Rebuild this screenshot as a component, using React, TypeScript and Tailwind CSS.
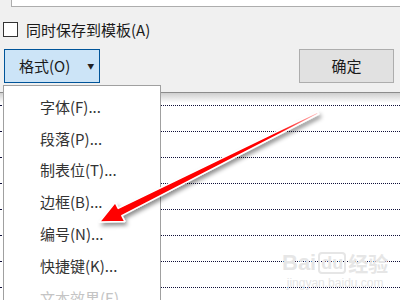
import React from 'react';

const menuItems = [
  { label: '字体(F)...', disabled: false },
  { label: '段落(P)...', disabled: false },
  { label: '制表位(T)...', disabled: false },
  { label: '边框(B)...', disabled: false },
  { label: '编号(N)...', disabled: false },
  { label: '快捷键(K)...', disabled: false },
  { label: '文本效果(E)...', disabled: true },
];

const font = { fontFamily: '"Noto Sans CJK SC", "Microsoft YaHei", sans-serif' };
const latin = { fontFamily: 'Arial, "Liberation Sans", sans-serif' };

const App = () => {
  return (
    <div className="relative w-[400px] h-[300px] overflow-hidden bg-white text-[15px]" style={font}>
      {/* dialog part */}
      <div className="h-[93px] bg-[#f0f0f0] border-b border-[#8c8c8c] flex flex-col">
        <div className="ml-[11px] h-[7px] bg-white border-l border-b border-[#adadad]" />
        <div className="flex items-center gap-[8px] ml-[3px] mt-[15px] h-[15px]">
          <div className="w-[15px] h-[15px] border border-[#333] bg-white" />
          <span className="text-[#1a1a1a] leading-none">同时保存到模板(A)</span>
        </div>
        <div className="flex justify-between mt-[12px] pl-[4px] pr-[6px]">
          <div className="w-[96px] h-[34px] bg-[#cce4f7] border border-[#005499] flex items-center pl-[14px]">
            <span className="text-[#1a1a1a]">格式(O)</span>
            <span className="ml-[17px] text-[7px] text-[#222]">▼</span>
          </div>
          <div className="w-[95px] h-[34px] bg-[#e1e1e1] border border-[#adadad] flex items-center justify-center">
            <span className="text-[#1a1a1a]">确定</span>
          </div>
        </div>
      </div>

      {/* document area */}
      <div className="h-[10px] bg-gradient-to-b from-[#cfcfcf] to-white" />
      <div className="pt-[2px]">
        {Array.from({ length: 8 }).map((_, i) => (
          <div key={i} className="h-[26px] border-t border-dotted border-[#10103a]" />
        ))}
      </div>

      {/* watermark */}
      <div className="absolute left-[282px] top-[252px] flex flex-col items-center text-[#e6e6e6] leading-none">
        <div className="flex items-end gap-[2px]">
          <span className="text-[22px] font-bold" style={latin}>Bai</span>
          <span className="text-[18px] font-bold border-2 border-[#e6e6e6] rounded px-[1px]" style={latin}>du</span>
          <span className="text-[20px] font-bold">经验</span>
        </div>
        <span className="text-[12px] mt-[3px]" style={latin}>jingyan.baidu.com</span>
      </div>

      {/* dropdown menu */}
      <div className="absolute left-[3px] top-[85px] w-[158px] h-[230px] bg-white border border-[#a0a0a0] flex flex-col pt-[5px]">
        {menuItems.map((item) => (
          <div
            key={item.label}
            className={`h-[32px] flex items-center pl-[36px] ${item.disabled ? 'text-[#c4c4c4]' : 'text-[#333]'}`}
          >
            {item.label}
          </div>
        ))}
      </div>

      {/* red arrow */}
      <svg className="absolute left-0 top-0 pointer-events-none" width="400" height="300">
        <defs>
          <filter id="sh" x="-20%" y="-20%" width="140%" height="140%">
            <feDropShadow dx="2" dy="3" stdDeviation="2" floodColor="#000" floodOpacity="0.45" />
          </filter>
          <linearGradient id="fade" x1="318" y1="113" x2="220" y2="162" gradientUnits="userSpaceOnUse">
            <stop offset="0" stopColor="#ffc0c0" />
            <stop offset="0.4" stopColor="#ff0000" />
            <stop offset="1" stopColor="#ff0000" />
          </linearGradient>
        </defs>
        <g filter="url(#sh)">
          <path
            d="M317.4 112 L318.6 114 L121.8 215.6 L124.8 221.4 L99.5 222 L115.2 202.6 L118.2 208.4 Z"
            fill="url(#fade)"
            stroke="#fff"
            strokeWidth="1.5"
            strokeLinejoin="round"
          />
        </g>
      </svg>
    </div>
  );
};

export default App;
